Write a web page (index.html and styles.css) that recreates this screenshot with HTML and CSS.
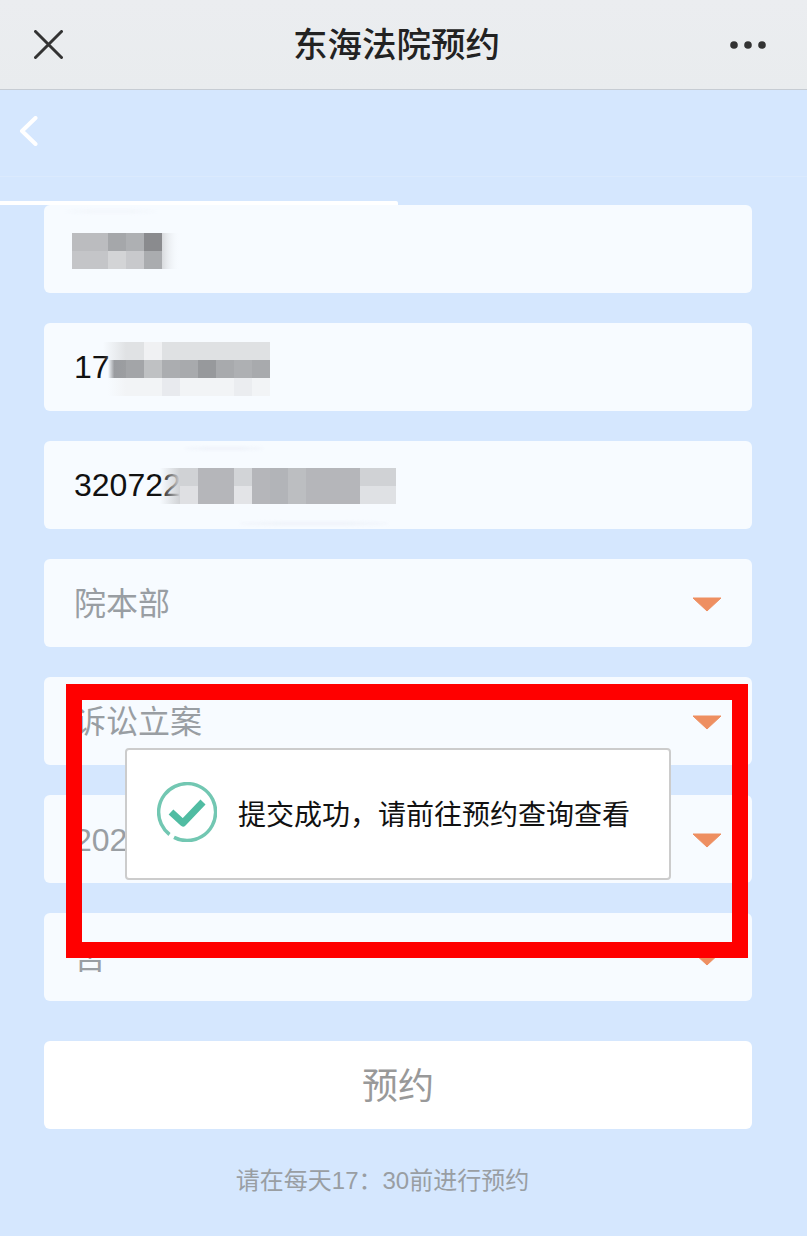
FILE: index.html
```html
<!DOCTYPE html>
<html lang="zh">
<head>
<meta charset="utf-8">
<title>东海法院预约</title>
<link rel="stylesheet" href="styles.css">
</head>
<body>
<div class="page">
  <header class="topbar">
    <svg class="icon-close" width="29" height="29" viewBox="0 0 29 29"><path d="M1.5 1.5 27.5 27.5M27.5 1.5 1.5 27.5"/></svg>
    <h1 class="title">东海法院预约</h1>
    <svg class="icon-more" width="36" height="8" viewBox="0 0 36 8"><circle cx="4" cy="4" r="3.8"/><circle cx="18" cy="4" r="3.8"/><circle cx="32" cy="4" r="3.8"/></svg>
  </header>
  <nav class="subnav">
    <svg class="icon-back" width="19" height="30" viewBox="0 0 19 30"><path d="M16.5 2 3 15 16.5 28"/></svg>
  </nav>
  <div class="progress"></div>
  <form class="form">
    <div class="field">
      <span class="smudge smudge-name"></span>
      <svg class="mosaic mosaic-name" width="108" height="36" viewBox="0 0 108 36">
        <defs><linearGradient id="fadeC"><stop offset="0" stop-color="#d8dadd"/><stop offset="1" stop-color="#f7fbff" stop-opacity="0"/></linearGradient></defs>
        <rect x="0" y="0" width="36" height="18" fill="#bbbcbf"/><rect x="36" y="0" width="18" height="18" fill="#a5a7aa"/><rect x="54" y="0" width="18" height="18" fill="#aeb0b3"/><rect x="72" y="0" width="18" height="18" fill="#8a8b8e"/><rect x="0" y="18" width="36" height="18" fill="#c4c5c8"/><rect x="36" y="18" width="18" height="18" fill="#d3d4d6"/><rect x="54" y="18" width="18" height="18" fill="#c8c9cc"/><rect x="72" y="18" width="18" height="18" fill="#aaacaf"/><rect x="90" y="0" width="18" height="36" fill="url(#fadeC)"/>
      </svg>
    </div>
    <div class="field field-value">
      <span>17</span>
      <svg class="mosaic mosaic-phone" width="170" height="54" viewBox="0 0 170 54">
        <defs>
          <linearGradient id="fadeA"><stop offset="0" stop-color="#e0e2e4" stop-opacity="0"/><stop offset="1" stop-color="#e0e2e4"/></linearGradient>
          <linearGradient id="fadeD"><stop offset="0" stop-color="#8f9195" stop-opacity="0"/><stop offset=".35" stop-color="#8f9195" stop-opacity=".9"/><stop offset="1" stop-color="#9c9ea1"/></linearGradient>
          <linearGradient id="fadeE"><stop offset="0" stop-color="#f2f4f6" stop-opacity="0"/><stop offset="1" stop-color="#f2f4f6"/></linearGradient>
        </defs>
        <rect x="3" width="23" height="18" fill="url(#fadeA)"/><rect x="26" width="18" height="18" fill="#e0e2e4"/><rect x="44" width="18" height="18" fill="#f0f1f3"/><rect x="62" width="108" height="18" fill="#dfe1e3"/>
        <rect x="8" y="18" width="18" height="18" fill="url(#fadeD)"/><rect x="26" y="18" width="18" height="18" fill="#a3a5a8"/><rect x="44" y="18" width="18" height="18" fill="#bfc1c3"/><rect x="62" y="18" width="18" height="18" fill="#abadb0"/><rect x="80" y="18" width="18" height="18" fill="#a8aaad"/><rect x="98" y="18" width="18" height="18" fill="#97999c"/><rect x="116" y="18" width="18" height="18" fill="#a8aaad"/><rect x="134" y="18" width="18" height="18" fill="#aeb0b3"/><rect x="152" y="18" width="18" height="18" fill="#a8aaad"/>
        <rect x="8" y="36" width="18" height="18" fill="url(#fadeE)"/><rect x="26" y="36" width="144" height="18" fill="#f2f4f6"/><rect x="62" y="36" width="18" height="18" fill="#e8eaee"/><rect x="134" y="36" width="18" height="18" fill="#ebedf0"/>
      </svg>
    </div>
    <div class="field field-value">
      <span class="smudge smudge-id-top"></span>
      <span class="smudge smudge-id-bottom"></span>
      <span>320722</span>
      <svg class="mosaic mosaic-id" width="236" height="36" viewBox="0 0 236 36">
        <defs><linearGradient id="fadeB"><stop offset="0" stop-color="#d0d2d5" stop-opacity="0"/><stop offset="1" stop-color="#d0d2d5"/></linearGradient></defs>
        <rect width="20" height="36" fill="url(#fadeB)"/>
        <rect x="20" width="18" height="18" fill="#d0d2d5"/><rect x="20" y="18" width="18" height="18" fill="#dfe0e3"/><rect x="38" width="36" height="36" fill="#b5b6ba"/><rect x="74" width="18" height="18" fill="#d2d4d7"/><rect x="74" y="18" width="18" height="18" fill="#e3e4e7"/><rect x="92" width="18" height="36" fill="#b5b6ba"/><rect x="110" width="18" height="36" fill="#b2b4b8"/><rect x="128" width="18" height="36" fill="#bcbec1"/><rect x="146" width="54" height="36" fill="#b5b6ba"/><rect x="200" width="36" height="18" fill="#d0d2d5"/><rect x="200" y="18" width="36" height="18" fill="#dfe1e4"/>
      </svg>
    </div>
    <div class="field field-select">
      <span class="label">院本部</span>
      <svg class="caret" width="30" height="15" viewBox="0 0 30 15"><path d="M1 1H29L15 14Z"/></svg>
    </div>
    <div class="field field-select">
      <span class="label">诉讼立案</span>
      <svg class="caret" width="30" height="15" viewBox="0 0 30 15"><path d="M1 1H29L15 14Z"/></svg>
    </div>
    <div class="field field-select">
      <span class="label-latin">2020-06-18</span>
      <svg class="caret" width="30" height="15" viewBox="0 0 30 15"><path d="M1 1H29L15 14Z"/></svg>
    </div>
    <div class="field field-select">
      <span class="label">否</span>
      <svg class="caret" width="30" height="15" viewBox="0 0 30 15"><path d="M1 1H29L15 14Z"/></svg>
    </div>
    <button class="submit" type="button">预约</button>
    <p class="tip">请在每天17：30前进行预约</p>
  </form>
  <div class="highlight"></div>
  <div class="toast">
    <svg class="icon-ok" width="60" height="60" viewBox="0 0 60 60">
      <path class="ring" d="M12.5 52.5A28.5 28.5 0 1 1 17 55.4"/>
      <path class="tick" d="M14 30 26 41 46 20"/>
    </svg>
    <span class="toast-text">提交成功，请前往预约查询查看</span>
  </div>
</div>
</body>
</html>
```
FILE: styles.css
```css
* { box-sizing: border-box; }
html, body { margin: 0; padding: 0; }
body {
  background: #d5e7fe;
  font-family: "Liberation Sans", "Noto Sans CJK SC", sans-serif;
}
.page {
  position: relative;
  width: 807px;
  height: 1236px;
  overflow: hidden;
}
.topbar {
  display: flex;
  align-items: center;
  height: 90px;
  padding: 0 41px 0 34px;
  background: linear-gradient(#ebedf0, #e9ecee);
  border-bottom: 1px solid #c6ccd3;
}
.title {
  flex: 1;
  margin: 0;
  text-align: center;
  font-size: 34.5px;
  line-height: 44px;
  font-weight: 500;
  color: #222;
}
.icon-close path { fill: none; stroke: #333; stroke-width: 3; stroke-linecap: round; }
.icon-more circle { fill: #333; }
.subnav {
  display: flex;
  align-items: center;
  height: 87px;
  padding: 0 0 4px 19px;
  border-bottom: 1px solid #dbeafd;
}
.icon-back path { fill: none; stroke: #fff; stroke-width: 4; stroke-linecap: round; stroke-linejoin: round; }
.progress {
  width: 398px;
  height: 4px;
  margin-top: 24px;
  background: #fff;
  border-top-right-radius: 2px;
}
.form {
  display: flex;
  flex-direction: column;
  gap: 30px;
  width: 708px;
  margin: 0 0 0 44px;
}
.field {
  position: relative;
  display: flex;
  align-items: center;
  justify-content: space-between;
  height: 88px;
  padding: 0 30px;
  background: #f7fbff;
  border-radius: 6px;
  font-size: 32px;
}
.field-value { color: #111; }
.field-select { color: #999ea3; }
.label { margin-bottom: 4px; }
.label-latin { margin-top: 3px; }
.mosaic { position: absolute; }
.mosaic-name { left: 28px; top: 28px; }
.mosaic-phone { left: 56px; top: 19px; }
.mosaic-id { left: 116px; top: 27px; }
.smudge {
  position: absolute;
  height: 3px;
  background: #eef2f9;
  border-radius: 50%;
  filter: blur(1.5px);
}
.smudge-name { left: 22px; top: 5px; width: 90px; background: #f2f6fb; }
.smudge-id-top { left: 140px; top: 6px; width: 80px; }
.smudge-id-bottom { left: 195px; top: 81px; width: 150px; }
.caret { margin-top: 2px; }
.caret path { fill: #ee8f61; stroke: #ee8f61; stroke-width: 1; stroke-linejoin: round; }
.submit {
  height: 88px;
  margin-top: 10px;
  padding: 0 0 4px;
  border: 0;
  border-radius: 6px;
  background: #fff;
  color: #999;
  font: inherit;
  font-size: 36px;
}
.tip {
  margin: 6px 0 0;
  padding-right: 31px;
  text-align: center;
  font-size: 24px;
  line-height: 32px;
  color: #999ea3;
}
.highlight {
  position: absolute;
  left: 66px;
  top: 684px;
  width: 682px;
  height: 274px;
  border: 16px solid #f00;
}
.toast {
  position: absolute;
  left: 125px;
  top: 748px;
  width: 546px;
  height: 132px;
  display: flex;
  align-items: center;
  gap: 21px;
  padding-left: 30px;
  background: #fff;
  border: 2px solid #ccc;
  border-radius: 4px;
  font-size: 28px;
  color: #111;
}
.icon-ok { flex: none; margin-bottom: 4px; }
.toast-text { margin-bottom: 2px; }
.ring { fill: none; stroke: #72c7b2; stroke-width: 3.5; }
.tick { fill: none; stroke: #50bca2; stroke-width: 7; stroke-linejoin: round; }
```
